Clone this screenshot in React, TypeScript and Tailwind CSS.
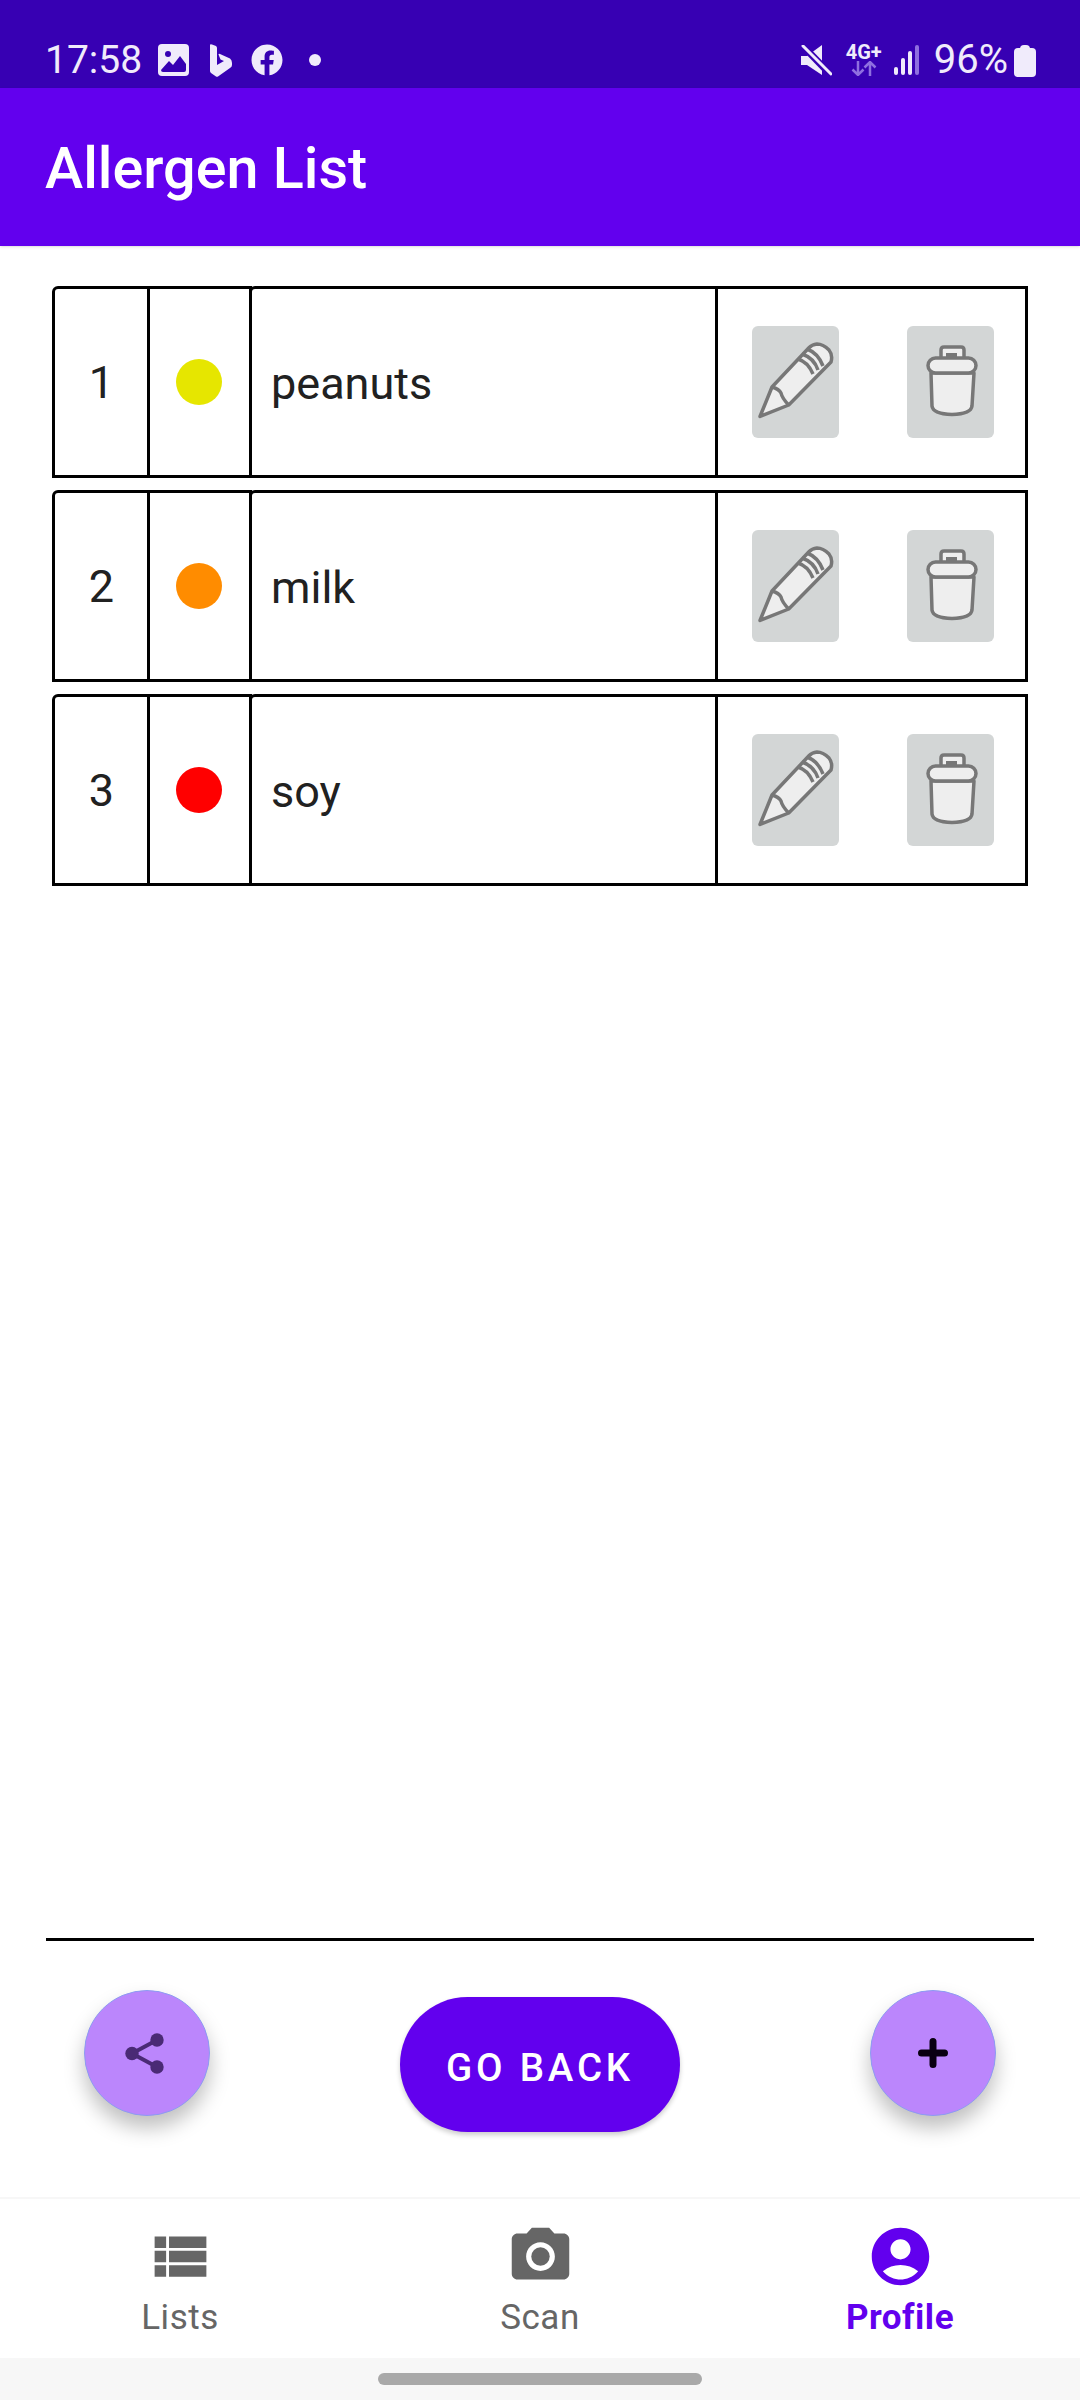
import { FaFacebook } from "react-icons/fa";
import { MdAccountCircle, MdPhotoCamera, MdViewList } from "react-icons/md";

const allergens = [
  { id: 1, name: "peanuts", color: "bg-[#e6e600]" },
  { id: 2, name: "milk", color: "bg-[#ff8c00]" },
  { id: 3, name: "soy", color: "bg-[#ff0000]" },
];

function PencilIcon() {
  return (
    <svg width="87" height="112" viewBox="0 0 87 112" fill="none" stroke="#777" strokeWidth="3.5" strokeLinejoin="round">
      <path
        d="M8 90.5 L20 61 L56.7 22 Q60 18.5 65 18 Q71 18 77 24 Q81 29 79 36 L36.7 79 Z"
        fill="#eee"
      />
      <path d="M20 61 Q27 63 29 67 Q30 72 36.7 79" />
      <path d="M46 33 Q56 36 61 48 M50 28 Q62 32 66 44 M55 23 Q66 27 71 40" />
    </svg>
  );
}

function TrashIcon() {
  return (
    <svg width="87" height="112" viewBox="0 0 87 112" fill="none" stroke="#777" strokeWidth="3.5" strokeLinejoin="round">
      <path d="M24 47 L67 47 L65 80 Q64 88 45 88.5 Q26 88 25 80 Z" fill="#eee" />
      <path d="M34 33 L34 24 Q34 21 37 21 L54 21 Q57 21 57 24 L57 33" fill="#eee" />
      <rect x="21" y="32" width="48" height="15" rx="7.5" fill="#eee" />
      <rect x="39" y="27" width="11" height="5" fill="#777" stroke="none" />
    </svg>
  );
}

function GalleryIcon() {
  return (
    <svg width="31" height="32" viewBox="0 0 31 32" className="ml-[16px]">
      <rect width="31" height="32" rx="4" fill="#f0ebfb" />
      <circle cx="10" cy="10" r="3" fill="#3700b3" />
      <path d="M3 26 L11 17 L15 21 L22 12 L28 20 L28 26 Q28 28 26 28 L5 28 Q3 28 3 26 Z" fill="#3700b3" />
    </svg>
  );
}

function BingIcon() {
  return (
    <svg width="22" height="33" viewBox="0 0 22 33" className="ml-[21px]">
      <path
        d="M0 1 Q0 0 2 0.5 L6 2 Q7 3 7 4 L7 21 L14 17 L10.5 15.5 L8.5 10.5 Q8.5 9.5 10 10 L20 14.5 Q22 16 22 19 L22 21 Q22 23 20 24 L8 32.5 Q7 33 6 32.5 L1 29 Q0 28 0 27 Z"
        fill="#f0ebfb"
      />
    </svg>
  );
}

function MuteIcon() {
  return (
    <svg width="31" height="31" viewBox="0 0 31 31">
      <path d="M0 11 L6 11 L21 0 L21 30 L6 20 L0 20 Z" fill="#f0ebfb" />
      <path d="M2 1 L30 30" stroke="#3700b3" strokeWidth="7" />
      <path d="M2 1 L30 29" stroke="#f0ebfb" strokeWidth="3" strokeLinecap="round" />
    </svg>
  );
}

function DataArrows() {
  return (
    <svg width="26" height="15" viewBox="0 0 26 15" fill="none" stroke="#8f6fe0" strokeWidth="2.5">
      <path d="M7 0 V14 M1.5 8.5 L7 14 L12.5 8.5" />
      <path d="M19 15 V1 M13.5 6.5 L19 1 L24.5 6.5" />
    </svg>
  );
}

function ShareIcon() {
  return (
    <svg width="39" height="41" viewBox="0 0 39 41" fill="#4a2a75" stroke="#4a2a75">
      <path d="M7 20.5 L32 7 M7 20.5 L32 34" strokeWidth="4" />
      <circle cx="7" cy="20.5" r="6.7" stroke="none" />
      <circle cx="32" cy="7" r="6.7" stroke="none" />
      <circle cx="32" cy="34" r="6.7" stroke="none" />
    </svg>
  );
}

function AllergenRow({ id, name, color }: { id: number; name: string; color: string }) {
  return (
    <div className="flex h-[192px]">
      <div className="flex w-[98px] items-center justify-center rounded-tl-md border-[3px] border-black pl-[1px] pt-[2px] text-[45px] text-[#212121]">
        {id}
      </div>
      <div className="-ml-[3px] flex w-[105px] items-center justify-center border-y-[3px] border-r-[3px] border-black pl-[1px]">
        <div className={`h-[46px] w-[46px] rounded-full ${color}`} />
      </div>
      <div className="-ml-[3px] flex w-[469px] items-center rounded-tl-md border-[3px] border-black pl-[19px] pt-[3px] text-[45px] text-[#212121]">
        {name}
      </div>
      <div className="-ml-[3px] flex w-[313px] items-center justify-between border-[3px] border-l-0 border-black pl-[37px] pr-[31px]">
        <button className="h-[112px] w-[87px] rounded-md bg-[#d3d6d6]">
          <PencilIcon />
        </button>
        <button className="h-[112px] w-[87px] rounded-md bg-[#d3d6d6]">
          <TrashIcon />
        </button>
      </div>
    </div>
  );
}

function NavItem({ label, icon, active }: { label: string; icon: React.ReactNode; active?: boolean }) {
  return (
    <div
      className={
        active
          ? "flex flex-col items-center text-[#6200ee]"
          : "flex flex-col items-center text-[#666666]"
      }
    >
      {icon}
      <span className={active ? "mt-[7px] text-[35px] font-bold leading-[40px] tracking-[0.5px]" : "mt-[7px] text-[35px] leading-[40px] tracking-[0.5px]"}>
        {label}
      </span>
    </div>
  );
}

export default function App() {
  return (
    <div className="flex h-[2400px] w-[1080px] flex-col bg-white font-['Roboto',sans-serif]">
      <div className="flex h-[88px] items-center bg-[#3700b3] pl-[45px] pr-[44px] pt-[32px] text-[#f0ebfb]">
        <span className="text-[39px] leading-none">17:58</span>
        <GalleryIcon />
        <BingIcon />
        <FaFacebook size={32} className="ml-[19px]" />
        <span className="ml-[26px] h-[12px] w-[12px] rounded-full bg-[#f0ebfb]" />
        <div className="flex-1" />
        <MuteIcon />
        <div className="ml-[15px] flex w-[34px] flex-col items-center">
          <span className="text-[20px] font-bold leading-[17px]">4G+</span>
          <DataArrows />
        </div>
        <div className="ml-[13px] flex h-[30px] items-end gap-[3px]">
          <span className="h-[8px] w-[4px] rounded-sm bg-[#f0ebfb]" />
          <span className="h-[17px] w-[4px] rounded-sm bg-[#f0ebfb]" />
          <span className="h-[24px] w-[4px] rounded-sm bg-[#f0ebfb]" />
          <span className="h-[30px] w-[4px] rounded-sm bg-[#8f6fe0]" />
        </div>
        <span className="ml-[15px] text-[40px] leading-none">96%</span>
        <div className="relative ml-[6px] h-[29px] w-[22px] translate-y-[2px] rounded-[4px] bg-[#f0ebfb]">
          <span className="absolute left-[6px] top-[-3px] h-[4px] w-[10px] rounded-t-sm bg-[#f0ebfb]" />
        </div>
      </div>

      <header className="flex h-[158px] items-center bg-[#6200ee] pl-[45px] pt-[4px] shadow-sm">
        <h1 className="text-[57.5px] font-medium text-white">Allergen List</h1>
      </header>

      <main className="flex flex-1 flex-col">
        <div className="mx-[52px] mt-[40px] flex flex-col gap-[12px]">
          {allergens.map((item) => (
            <AllergenRow key={item.id} {...item} />
          ))}
        </div>
      </main>

      <div className="mx-[46px] h-[3px] bg-black" />

      <div className="flex h-[258px] items-start justify-between border-b-2 border-[#f7f7f7] px-[84px] pt-[49px]">
        <button className="flex h-[126px] w-[126px] items-center justify-center rounded-full border border-[#8d9bf2] bg-[#bb86fc] pr-[5px] shadow-[0_12px_20px_rgba(0,0,0,0.25)]">
          <ShareIcon />
        </button>
        <button className="mt-[7px] h-[135px] w-[280px] rounded-full bg-[#6200ee] pt-[6px] text-[38.5px] font-medium tracking-[3.8px] text-white shadow-[0_3px_5px_rgba(0,0,0,0.2)]">
          GO BACK
        </button>
        <button className="flex h-[126px] w-[126px] items-center justify-center rounded-full border border-[#8d9bf2] bg-[#bb86fc] shadow-[0_12px_20px_rgba(0,0,0,0.25)]">
          <svg width="30" height="30" viewBox="0 0 30 30" stroke="#0a0012" strokeWidth="7" strokeLinecap="round">
            <path d="M15 3.5 V26.5 M3.5 15 H26.5" />
          </svg>
        </button>
      </div>

      <nav className="grid h-[159px] grid-cols-3 items-start pt-[23px]">
        <NavItem label="Lists" icon={<MdViewList size={69} />} />
        <NavItem label="Scan" icon={<MdPhotoCamera size={69} />} />
        <NavItem label="Profile" icon={<MdAccountCircle size={69} />} active />
      </nav>

      <div className="flex h-[42px] justify-center bg-[#f7f7f7] pt-[15px]">
        <div className="h-[12px] w-[324px] rounded-full bg-[#a9a9a9]" />
      </div>
    </div>
  );
}
